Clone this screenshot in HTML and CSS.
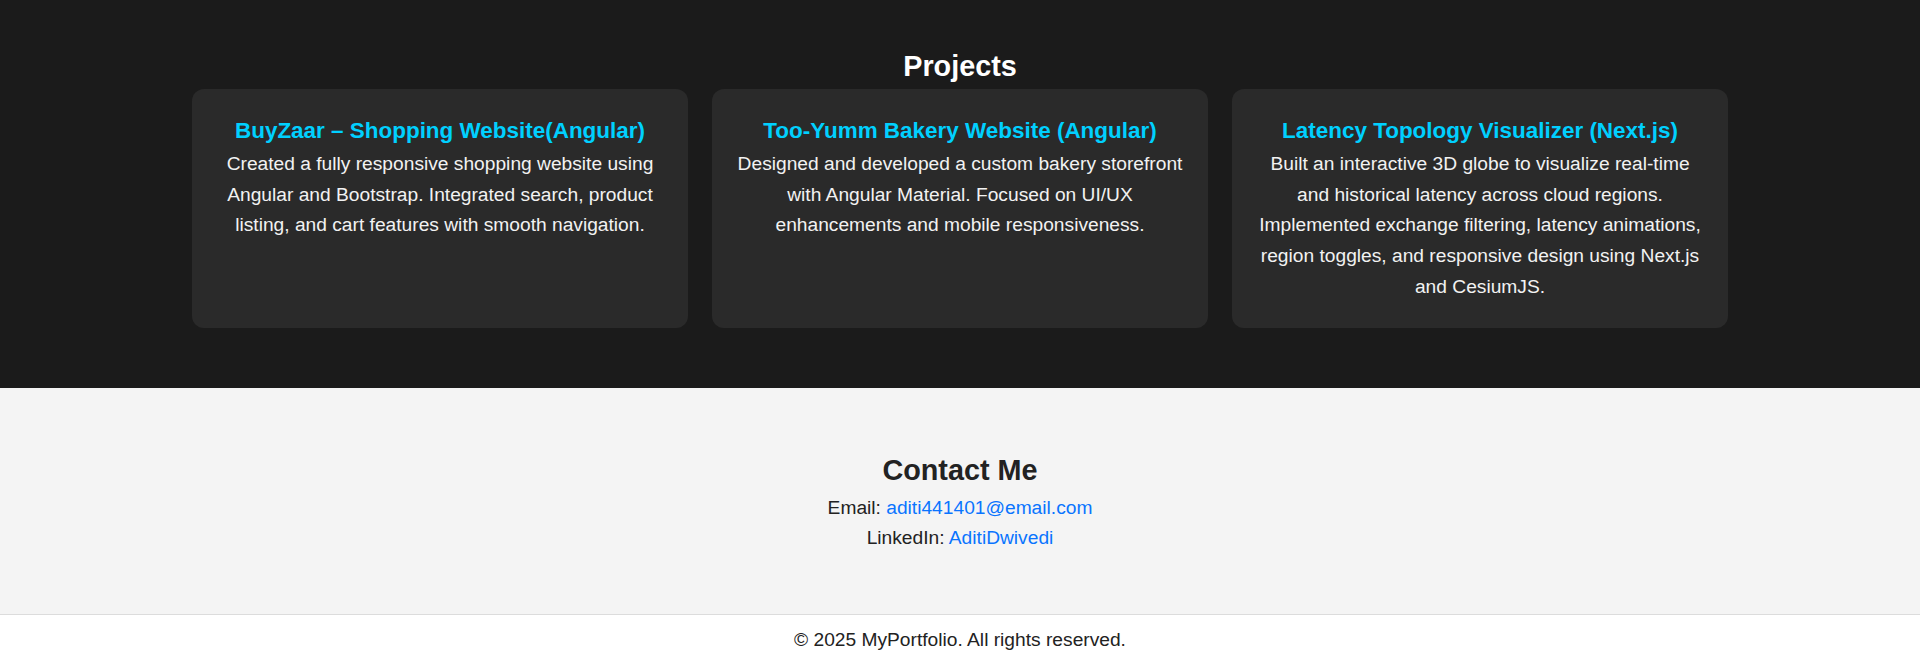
FILE: index.html
```html
<!DOCTYPE html>
<html lang="en">
<head>
<meta charset="utf-8">
<title>MyPortfolio</title>
<link rel="stylesheet" href="styles.css">
</head>
<body>
  <section class="projects">
    <h2 class="section-title">Projects</h2>
    <div class="project-grid">
      <div class="card">
        <h3 class="card-title">BuyZaar – Shopping Website(Angular)</h3>
        <p class="card-text">Created a fully responsive shopping website using Angular and Bootstrap. Integrated search, product listing, and cart features with smooth navigation.</p>
      </div>
      <div class="card">
        <h3 class="card-title">Too-Yumm Bakery Website (Angular)</h3>
        <p class="card-text">Designed and developed a custom bakery storefront with Angular Material. Focused on UI/UX enhancements and mobile responsiveness.</p>
      </div>
      <div class="card">
        <h3 class="card-title">Latency Topology Visualizer (Next.js)</h3>
        <p class="card-text">Built an interactive 3D globe to visualize real-time and historical latency across cloud regions. Implemented exchange filtering, latency animations, region toggles, and responsive design using Next.js and CesiumJS.</p>
      </div>
    </div>
  </section>
  <section class="contact">
    <h2 class="section-title dark">Contact Me</h2>
    <p class="contact-line">Email: <a class="link" href="#">aditi441401@email.com</a></p>
    <p class="contact-line">LinkedIn: <a class="link" href="#">AditiDwivedi</a></p>
  </section>
  <footer class="footer">
    <p class="footer-text">© 2025 MyPortfolio. All rights reserved.</p>
  </footer>
</body>
</html>
```
FILE: styles.css
```css
* { box-sizing: border-box; }
html, body { margin: 0; padding: 0; }
body {
  font-family: "Liberation Sans", Arial, sans-serif;
  font-size: 19.2px;
  line-height: 1.6;
  color: #222;
  background: #fff;
}
.projects {
  background: #1b1b1b;
  color: #f2f2f2;
  padding: 43px 0 60px;
  text-align: center;
}
.section-title {
  margin: 0;
  font-size: 1.5em;
  font-weight: bold;
  color: #fff;
  text-align: center;
}
.section-title.dark { color: #222; }
.project-grid {
  width: 80%;
  margin: 0 auto;
  display: grid;
  grid-template-columns: repeat(3, 1fr);
  gap: 24px;
}
.card {
  background: #2a2a2a;
  border-radius: 12px;
  padding: 24px 24px 25px;
}
.card-title {
  margin: 0;
  font-size: 1.17em;
  color: #00d0ff;
}
.card-text {
  margin: 0;
  color: #f2f2f2;
}
.contact {
  background: #f4f4f4;
  padding: 59px 0 60px;
  text-align: center;
}
.contact-line { margin: 0; color: #222; }
.link { color: #0a74ff; text-decoration: none; }
.footer {
  border-top: 1px solid #dcdcdc;
  background: #fff;
  text-align: center;
  padding: 10px 0;
}
.footer-text { margin: 0; color: #222; }
```
